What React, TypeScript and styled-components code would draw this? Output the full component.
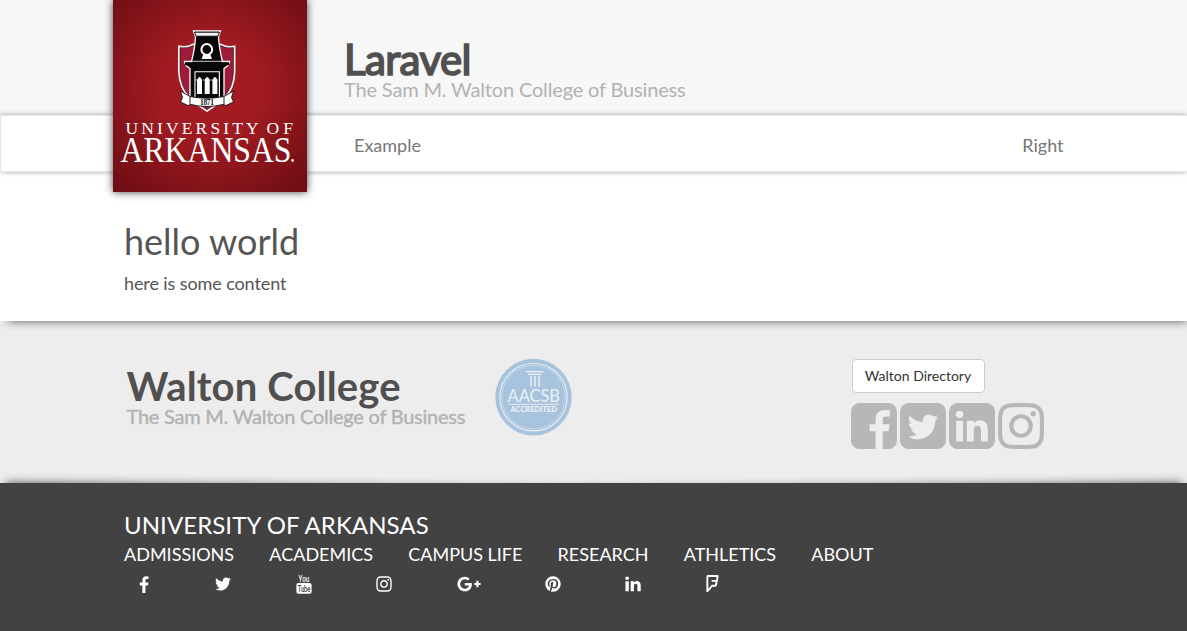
import React from "react";
import styled, { createGlobalStyle } from "styled-components";
import { FaFoursquare } from "react-icons/fa";

const GlobalStyle = createGlobalStyle`
  *, *::before, *::after { box-sizing: border-box; }
  body {
    margin: 0;
    background: #fff;
    color: #555;
    font: 18px/26px Lato, "Liberation Sans", sans-serif;
    overflow: hidden;
  }
  a { color: inherit; text-decoration: none; }
  svg { display: block; }
`;

const Page = styled.div`
  min-height: 631px;
  display: flex;
  flex-direction: column;
`;

const Container = styled.div`
  width: 970px;
  margin: 0 auto;
  padding: 0 15px 0 15.5px;
  position: relative;
`;

const Header = styled.header`
  height: 115px;
  background: #f7f7f7;
`;

const LogoLink = styled.a`
  position: absolute;
  z-index: 3;
  top: 0;
  left: 4.5px;
  width: 194px;
  height: 192px;
  box-shadow: 0 0 8px rgba(0, 0, 0, 0.75);
`;

const Titles = styled.div`
  padding: 36px 0 0 220px;
`;

const SiteTitle = styled.h1`
  margin: 0;
  font-size: 42px;
  line-height: 46px;
  font-weight: 400;
  letter-spacing: -0.6px;
  color: #505050;
  -webkit-text-stroke: 1.7px #505050;
`;

const SiteSubtitle = styled.p`
  margin: -5px 0 0;
  font-size: 20px;
  line-height: 24px;
  letter-spacing: -0.16px;
  color: #b2b2b2;
`;

const Nav = styled.nav`
  position: relative;
  z-index: 1;
  height: 57px;
  background: #fff;
  border: 1px solid #e7e7e7;
  border-right: 0;
  box-shadow: 0 0 5px rgba(0, 0, 0, 0.35);
`;

const NavRow = styled(Container)`
  display: flex;
  justify-content: space-between;
  padding: 15px 15.5px 0 245px;
  line-height: 28px;
  color: #777;
`;

const Main = styled.main`
  height: 149px;
  padding-top: 46px;
`;

const Heading = styled.h2`
  margin: 0;
  font-size: 36px;
  line-height: 46px;
  font-weight: 400;
`;

const Paragraph = styled.p`
  margin: 6px 0 0;
  letter-spacing: -0.1px;
`;

const College = styled.section`
  height: 162px;
  background: #ededed;
  position: relative;
  overflow: hidden;

  &::before {
    content: "";
    position: absolute;
    top: -10px;
    left: 8px;
    right: 0;
    height: 10px;
    box-shadow: 0 0 10px rgba(0, 0, 0, 0.65);
  }
`;

/* Lifted-corner shadow: darkest at the page edge, sinking towards the middle. */
const CornerShadow = styled.div<{ $side: "left" | "right" }>`
  position: absolute;
  bottom: -20px;
  ${(p) => p.$side}: 6px;
  width: 50%;
  height: 20px;
  transform-origin: top ${(p) => p.$side};
  transform: rotate(${(p) => (p.$side === "left" ? 0.6 : -0.6)}deg);
  box-shadow: 0 0 10px rgba(0, 0, 0, 0.7);
`;

const CollegeRow = styled(Container)`
  display: flex;
  padding-top: 38px;
`;

const CollegeName = styled.div`
  width: 371px;
  padding: 4px 0 0 2.5px;
  white-space: nowrap;
`;

const CollegeTitle = styled.div`
  font-size: 40px;
  line-height: 46px;
  font-weight: 700;
  letter-spacing: 0.14px;
  color: #505050;
`;

const CollegeSubtitle = styled.div`
  margin-top: -5px;
  font-size: 20px;
  line-height: 24px;
  letter-spacing: -0.24px;
  color: #b2b2b2;
  -webkit-text-stroke: 0.4px #b2b2b2;
`;

const Directory = styled.div`
  margin-left: 280px;
`;

const DirectoryButton = styled.button`
  display: block;
  width: 133px;
  height: 34px;
  padding: 0 1px 0 0;
  border: 1px solid #ccc;
  border-radius: 4px;
  background: #fff;
  color: #333;
  font: 14px/20px Lato, "Liberation Sans", sans-serif;
`;

const SquareIcons = styled.div`
  display: flex;
  gap: 3px;
  margin: 10px 0 0 -1px;
  color: #b7b7b7;
`;

const Footer = styled.footer`
  flex: 1;
  padding-top: 28px;
  background: #424242;
  color: #fff;
`;

const FooterTitle = styled.div`
  font-size: 24px;
  line-height: 28px;
  letter-spacing: 0.07px;
`;

const FooterLinks = styled.div`
  display: flex;
  gap: 35.2px;
  margin-top: 2px;
`;

const FooterIcons = styled.div`
  display: flex;
  margin-top: 8px;
`;

const IconCell = styled.a<{ $width: number; $indent?: number }>`
  width: ${(p) => p.$width}px;
  height: 21px;
  padding-left: ${(p) => p.$indent ?? 0}px;
  display: flex;
  align-items: flex-start;
`;

const YouTubeCell = styled(IconCell)`
  margin-top: -1px;
`;

const paths = {
  facebookSquare:
    "M1376 128q119 0 203.5 84.5t84.5 203.5v960q0 119-84.5 203.5t-203.5 84.5h-188v-595h199l30-232h-229v-148q0-56 23.5-84t91.5-28l122-1v-207q-63-9-178-9-136 0-217.5 80t-81.5 226v171h-200v232h200v595h-532q-119 0-203.5-84.5t-84.5-203.5v-960q0-119 84.5-203.5t203.5-84.5h960z",
  twitterSquare:
    "M1408 610q-56 25-121 34 68-40 93-117-65 38-134 51-61-66-153-66-87 0-148.5 61.5t-61.5 148.5q0 29 5 48-129-7-242-65t-192-155q-29 50-29 106 0 114 91 175-47-1-100-26v2q0 75 50 133.5t123 72.5q-29 8-51 8-13 0-39-4 21 63 74.5 104t121.5 42q-116 90-261 90-26 0-50-3 148 94 322 94 112 0 210-35.5t168-95 120.5-137 75-162 24.5-168.5q0-18-1-27 63-45 105-109zm256-194v960q0 119-84.5 203.5t-203.5 84.5h-960q-119 0-203.5-84.5t-84.5-203.5v-960q0-119 84.5-203.5t203.5-84.5h960q119 0 203.5 84.5t84.5 203.5z",
  linkedinSquare:
    "M365 1414h231v-694h-231v694zm246-908q-1-52-36-86t-93-34-94.5 34-36.5 86q0 51 35.5 85.5t92.5 34.5h1q59 0 95-34.5t36-85.5zm585 908h231v-398q0-154-73-233t-193-79q-136 0-209 117h2v-101h-231q3 66 0 694h231v-388q0-38 7-56 15-35 45-59.5t74-24.5q116 0 116 157v371zm468-998v960q0 119-84.5 203.5t-203.5 84.5h-960q-119 0-203.5-84.5t-84.5-203.5v-960q0-119 84.5-203.5t203.5-84.5h960q119 0 203.5 84.5t84.5 203.5z",
  instagram:
    "M1152 896q0-106-75-181t-181-75-181 75-75 181 75 181 181 75 181-75 75-181zm138 0q0 164-115 279t-279 115-279-115-115-279 115-279 279-115 279 115 115 279zm108-410q0 38-27 65t-65 27-65-27-27-65 27-65 65-27 65 27 27 65zm-502-220q-7 0-76.5-.5t-105.5 0-96.5 3-103 10-71.5 18.5q-50 20-88 58t-58 88q-11 29-18.5 71.5t-10 103-3 96.5 0 105.5.5 76.5-.5 76.5 0 105.5 3 96.5 10 103 18.5 71.5q20 50 58 88t88 58q29 11 71.5 18.5t103 10 96.5 3 105.5 0 76.5-.5 76.5.5 105.5 0 96.5-3 103-10 71.5-18.5q50-20 88-58t58-88q11-29 18.5-71.5t10-103 3-96.5 0-105.5-.5-76.5.5-76.5 0-105.5-3-96.5-10-103-18.5-71.5q-20-50-58-88t-88-58q-29-11-71.5-18.5t-103-10-96.5-3-105.5 0-76.5.5zm768 630q0 229-5 317-10 208-124 322t-322 124q-88 5-317 5t-317-5q-208-10-322-124t-124-322q-5-88-5-317t5-317q10-208 124-322t322-124q88-5 317-5t317 5q208 10 322 124t124 322q5 88 5 317z",
  facebook:
    "M1343 12v264h-157q-86 0-116 36t-30 108v189h293l-39 296h-254v759h-306v-759h-255v-296h255v-218q0-186 104-288.5t277-102.5q147 0 228 12z",
  twitter:
    "M1684 408q-67 98-162 167 1 14 1 42 0 130-38 259.5t-115.5 248.5-184.5 210.5-258 146-323 54.5q-271 0-496-145 35 4 78 4 225 0 401-138-105-2-188-64.5t-114-159.5q33 5 61 5 43 0 85-11-112-23-185.5-111.5t-73.5-205.5v-4q68 38 146 41-66-44-105-115t-39-154q0-88 44-163 121 149 294.5 238.5t371.5 99.5q-8-38-8-74 0-134 94.5-228.5t228.5-94.5q140 0 236 102 109-21 205-78-37 115-142 178 93-10 186-50z",
  googlePlus:
    "M1437 913q0 208-87 370.5t-248 254-369 91.5q-149 0-285-58t-234-156-156-234-58-285 58-285 156-234 234-156 285-58q286 0 491 192l-199 191q-117-113-292-113-123 0-227.5 62t-165.5 168.5-61 232.5 61 232.5 165.5 168.5 227.5 62q83 0 152.5-23t114.5-57.5 78.5-78.5 49-83 21.5-74h-416v-252h692q12 63 12 122zm867-122v210h-209v209h-210v-209h-209v-210h209v-209h210v209h209z",
  pinterest:
    "M1664 896q0 209-103 385.5t-279.5 279.5-385.5 103q-111 0-218-32 59-93 78-164 9-34 54-211 20 39 73 67.5t114 28.5q121 0 216-68.5t147-188.5 52-270q0-114-59.5-214t-172.5-163-255-63q-105 0-196 29t-154.5 77-109 110.5-67 129.5-21.5 134q0 104 40 183t117 111q30 12 38-20 2-7 8-31t8-30q6-23-11-43-51-61-51-151 0-151 104.5-259.5t273.5-108.5q151 0 235.5 82t84.5 213q0 170-68.5 289t-175.5 119q-61 0-98-43.5t-23-104.5q8-35 26.5-93.5t30-103 11.5-75.5q0-50-27-83t-77-33q-62 0-105 57t-43 142q0 73 25 122l-99 418q-17 70-13 177-206-91-333-281t-127-423q0-209 103-385.5t279.5-279.5 385.5-103 385.5 103 279.5 279.5 103 385.5z",
  linkedin:
    "M477 625v991h-330v-991h330zm21-306q1 73-50.5 122t-135.5 49h-2q-82 0-132-49t-50-122q0-74 51.5-122.5t134.5-48.5 133 48.5 51 122.5zm1166 729v568h-329v-530q0-105-40.5-164.5t-126.5-59.5q-63 0-105.5 34.5t-63.5 85.5q-11 30-11 81v553h-329q2-399 2-647t-1-296l-1-48h329v144h-2q20-32 41-56t56.5-52 87-43.5 114.5-15.5q171 0 275 113.5t104 332.5z",
};

type GlyphName = keyof typeof paths;

/* A glyph on the 1792-unit em grid, cropped to the box it is given. */
function Glyph({ name, box, width, height }: { name: GlyphName; box: string; width: number; height: number }) {
  return (
    <svg viewBox={box} width={width} height={height} fill="currentColor" aria-hidden="true">
      <path d={paths[name]} />
    </svg>
  );
}

function YouTubeStack() {
  return (
    <svg width="16" height="21" viewBox="0 0 16 21" aria-hidden="true" overflow="visible">
      <rect x="0.4" y="9" width="15.2" height="10.8" rx="2" fill="#fff" />
      <text x="2.6" y="7.9" fontSize="9.5" fontWeight="500" textLength="10.6" lengthAdjust="spacingAndGlyphs" fill="#fff" fontFamily="Roboto, sans-serif">You</text>
      <text x="1.7" y="17.9" fontSize="9.5" fontWeight="500" textLength="12.6" lengthAdjust="spacingAndGlyphs" fill="#424242" fontFamily="Roboto, sans-serif">Tube</text>
    </svg>
  );
}

const shield = "M66 46.5Q74 48 80 44.5H108Q114 48 121.5 46.5V72Q121 88 112 97Q104 105 94 111Q84 105 76 97Q67 88 66 72Z";

function UniversityLogo() {
  return (
    <svg width="194" height="192" viewBox="0 0 194 192" role="img" aria-label="University of Arkansas">
      <defs>
        <radialGradient id="crimson" cx="0.5" cy="0.46" r="0.68">
          <stop offset="0" stopColor="#a81d24" />
          <stop offset="0.4" stopColor="#9f1a21" />
          <stop offset="1" stopColor="#710e15" />
        </radialGradient>
      </defs>
      <rect width="194" height="192" fill="url(#crimson)" />
      {/* shield */}
      <path d={shield} fill="#9e1b39" stroke="#f4f0f0" strokeWidth="2" />
      <path d={shield} fill="none" stroke="#222" strokeWidth="0.7" transform="translate(3.7 3) scale(0.96)" />
      {/* tower */}
      <path d="M80.5 31H107.5L105.5 36.5Q106 48 109.5 61.5H116.5L115 65.5L111 68.5V100H77V68.5L73 65.5L71.5 61.5H78.5Q82 48 82.5 36.5Z" fill="#080808" stroke="#fff" strokeWidth="1.3" />
      <path d="M81.5 32.2H106.5L105 36.2H83Z" fill="#f4f4f4" stroke="#080808" strokeWidth="0.9" />
      <path d="M72 63.8H116" stroke="#080808" strokeWidth="2.8" />
      <path d="M79 61.3H109" stroke="#fff" strokeWidth="0.8" />
      <circle cx="93.8" cy="49.5" r="5.4" fill="#080808" stroke="#fff" strokeWidth="2" />
      <path d="M90 55H97.6L99 59H88.6Z" fill="#fff" />
      <path d="M82 98V71.8H106.4V98" fill="none" stroke="#fff" strokeWidth="1.1" />
      <path d="M84 80V94H89V80Q86.5 74 84 80ZM91.7 80V94H96.7V80Q94.2 74 91.7 80ZM99.4 80V94H104.4V80Q101.9 74 99.4 80Z" fill="#fff" />
      <path d="M83 80H105.4" stroke="#fff" strokeWidth="1" strokeDasharray="1.4 1" />
      {/* ribbon */}
      <path d="M67.5 91L77 96.5Q94 100 111 96.5L120.5 91L118.5 97.5L120.5 102L113 105.5L110 104.5Q94 108.5 78 104.5L75 105.5L67.5 102L69.5 97.5Z" fill="#fff" stroke="#111" strokeWidth="0.9" />
      <path d="M77 96.5V104.5M111 96.5V104.5" stroke="#111" strokeWidth="0.9" />
      <text x="87" y="105.4" fontFamily="Liberation Serif, serif" fontWeight="700" fontSize="7.5" textLength="14" fill="#111">1871</text>
      <text x="12.6" y="134" fontFamily="Liberation Serif, serif" fontSize="17.5" textLength="133" fill="#fff" lengthAdjust="spacing">UNIVERSITY</text>
      <text x="153.5" y="134" fontFamily="Liberation Serif, serif" fontSize="17.5" textLength="26.5" fill="#fff" lengthAdjust="spacing">OF</text>
      <text x="7.5" y="161.5" fontFamily="Liberation Serif, serif" fontSize="36.5" textLength="171" lengthAdjust="spacingAndGlyphs" fill="#fff">ARKANSAS</text>
      <circle cx="179.6" cy="160.4" r="1.3" fill="#fff" />
    </svg>
  );
}

function AccreditedSeal() {
  return (
    <svg width="77" height="78" viewBox="0 0 77 78" role="img" aria-label="AACSB Accredited">
      <ellipse cx="38.5" cy="38.2" rx="38.2" ry="38.4" fill="#a7c3dd" />
      <circle cx="38.5" cy="38.2" r="33.7" fill="none" stroke="#edf1f5" strokeWidth="1.1" />
      <circle cx="38.5" cy="38.2" r="31.7" fill="none" stroke="#d7e3ed" strokeWidth="0.7" />
      <path d="M31 12H48.5V13.3H31ZM33 14.7H46.5V16H33Z" fill="#edf1f5" />
      <path d="M36 17V27.5M40 17V27.5M44 17V27.5" stroke="#edf1f5" strokeWidth="1.5" />
      <text x="12.5" y="43" fontFamily="Lato, sans-serif" fontSize="17.2" textLength="52.5" lengthAdjust="spacingAndGlyphs" fill="#edf1f5">AACSB</text>
      <path d="M13 45.3H64" stroke="#edf1f5" strokeWidth="0.9" />
      <text x="15.5" y="52.6" fontFamily="Lato, sans-serif" fontWeight="900" fontSize="7.2" textLength="46.5" lengthAdjust="spacingAndGlyphs" fill="#edf1f5">ACCREDITED</text>
    </svg>
  );
}

const squares: GlyphName[] = ["facebookSquare", "twitterSquare", "linkedinSquare", "instagram"];
const links = ["ADMISSIONS", "ACADEMICS", "CAMPUS LIFE", "RESEARCH", "ATHLETICS", "ABOUT"];

export default function App() {
  return (
    <Page>
      <GlobalStyle />
      <Header>
        <Container>
          <LogoLink href="#"><UniversityLogo /></LogoLink>
          <Titles>
            <SiteTitle>Laravel</SiteTitle>
            <SiteSubtitle>The Sam M. Walton College of Business</SiteSubtitle>
          </Titles>
        </Container>
      </Header>
      <Nav>
        <NavRow>
          <a href="#">Example</a>
          <a href="#">Right</a>
        </NavRow>
      </Nav>
      <Main>
        <Container>
          <Heading>hello world</Heading>
          <Paragraph>here is some content</Paragraph>
        </Container>
      </Main>
      <College>
        <CornerShadow $side="left" />
        <CornerShadow $side="right" />
        <CollegeRow>
          <CollegeName>
            <CollegeTitle>Walton College</CollegeTitle>
            <CollegeSubtitle>The Sam M. Walton College of Business</CollegeSubtitle>
          </CollegeName>
          <AccreditedSeal />
          <Directory>
            <DirectoryButton>Walton Directory</DirectoryButton>
            <SquareIcons>
              {squares.map((name) => (
                <Glyph key={name} name={name} box="128 128 1536 1536" width={46} height={46} />
              ))}
            </SquareIcons>
          </Directory>
        </CollegeRow>
      </College>
      <Footer>
        <Container>
          <FooterTitle>UNIVERSITY OF ARKANSAS</FooterTitle>
          <FooterLinks>
            {links.map((label) => <a href="#" key={label}>{label}</a>)}
          </FooterLinks>
          <FooterIcons>
            <IconCell $width={89.5} $indent={11}><Glyph name="facebook" box="0 -128 1792 1792" width={18} height={18} /></IconCell>
            <IconCell $width={82}><Glyph name="twitter" box="0 0 1792 1792" width={18} height={18} /></IconCell>
            <YouTubeCell $width={79.5}><YouTubeStack /></YouTubeCell>
            <IconCell $width={82}><Glyph name="instagram" box="0 0 1792 1792" width={18} height={18} /></IconCell>
            <IconCell $width={87}><Glyph name="googlePlus" box="0 0 2304 1792" width={24} height={18} /></IconCell>
            <IconCell $width={80}><Glyph name="pinterest" box="0 0 1792 1792" width={18} height={18} /></IconCell>
            <IconCell $width={79.5}><Glyph name="linkedin" box="0 0 1792 1792" width={18} height={18} /></IconCell>
            <IconCell $width={20}><FaFoursquare size={17} /></IconCell>
          </FooterIcons>
        </Container>
      </Footer>
    </Page>
  );
}
